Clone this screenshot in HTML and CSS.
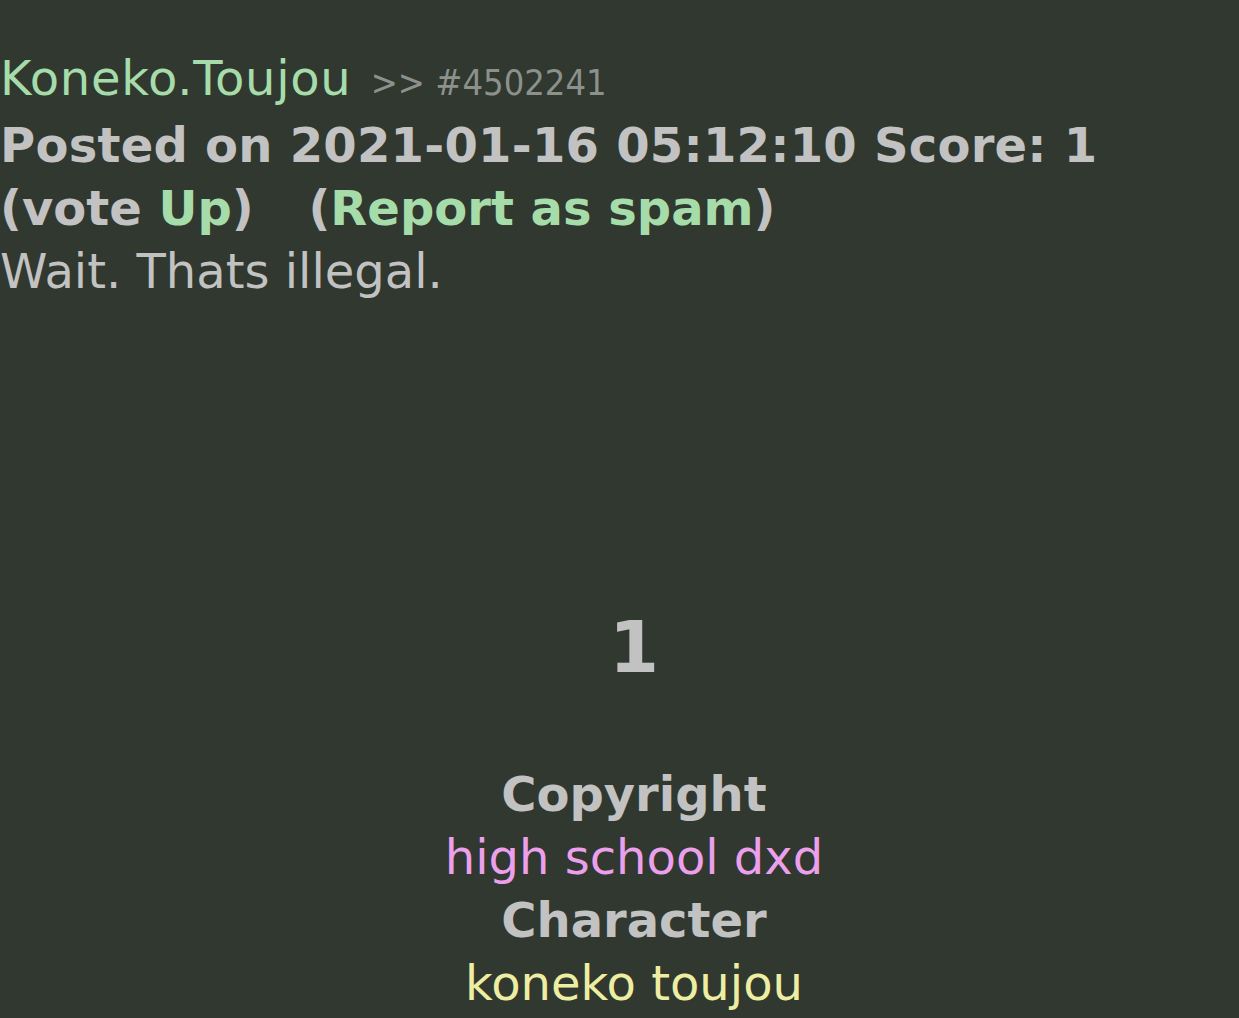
FILE: index.html
```html
<!DOCTYPE html>
<html lang="en">
<head>
    <meta charset="UTF-8">
    <meta name="viewport" content="width=device-width, initial-scale=1.0">
    <title>Comment #4502241</title>
    <link rel="stylesheet" href="styles.css">
</head>
<body>
    <div class="comment">
        <div class="comment-head">
            <a class="author" href="#">Koneko.Toujou</a>
            <span class="comment-id">&gt;&gt; #4502241</span>
        </div>
        <div class="comment-meta">Posted on 2021-01-16 05:12:10 Score: 1</div>
        <div class="comment-actions">
            <span>(vote <a href="#">Up</a>)</span>
            <span class="spam">(<a href="#">Report as spam</a>)</span>
        </div>
        <div class="comment-body">Wait. Thats illegal.</div>
    </div>

    <div class="summary">
        <h2 class="score">1</h2>
        <ul class="tags">
            <li class="tag-label">Copyright</li>
            <li class="tag copyright">high school dxd</li>
            <li class="tag-label">Character</li>
            <li class="tag character">koneko toujou</li>
        </ul>
    </div>
</body>
</html>
```

FILE: styles.css
```css
:root {
    --background-color: #303830;
    --text-color: #c2c2c2;
    --link-color: #a6dcaa;
    --muted-color: #8c918c;
    --copyright-color: #eca0ec;
    --character-color: #eeeea2;
}

body {
    margin: 0;
    padding-top: 47px;
    background-color: var(--background-color);
    color: var(--text-color);
    font-family: "DejaVu Sans", Verdana, sans-serif;
    font-size: 48px;
    line-height: 63px;
}

a {
    color: var(--link-color);
    text-decoration: none;
}

.author {
    letter-spacing: 0.7px;
}

.comment-id {
    color: var(--muted-color);
    font-family: "DejaVu Sans Condensed", "DejaVu Sans", sans-serif;
    font-stretch: condensed;
    font-size: 36px;
    margin-left: 4px;
}

.comment-meta,
.comment-actions {
    font-weight: bold;
}

.comment-meta {
    letter-spacing: 0.25px;
}

.spam {
    margin-left: 38px;
}

.summary {
    padding-left: 29px;
    text-align: center;
}

.score {
    margin: 297px 0 0;
    font-size: 72px;
    line-height: 94px;
}

.tags {
    list-style: none;
    margin: 69px 0 0;
    padding: 0;
}

.tag-label {
    font-weight: bold;
}

.copyright {
    color: var(--copyright-color);
}

.character {
    color: var(--character-color);
}
```
